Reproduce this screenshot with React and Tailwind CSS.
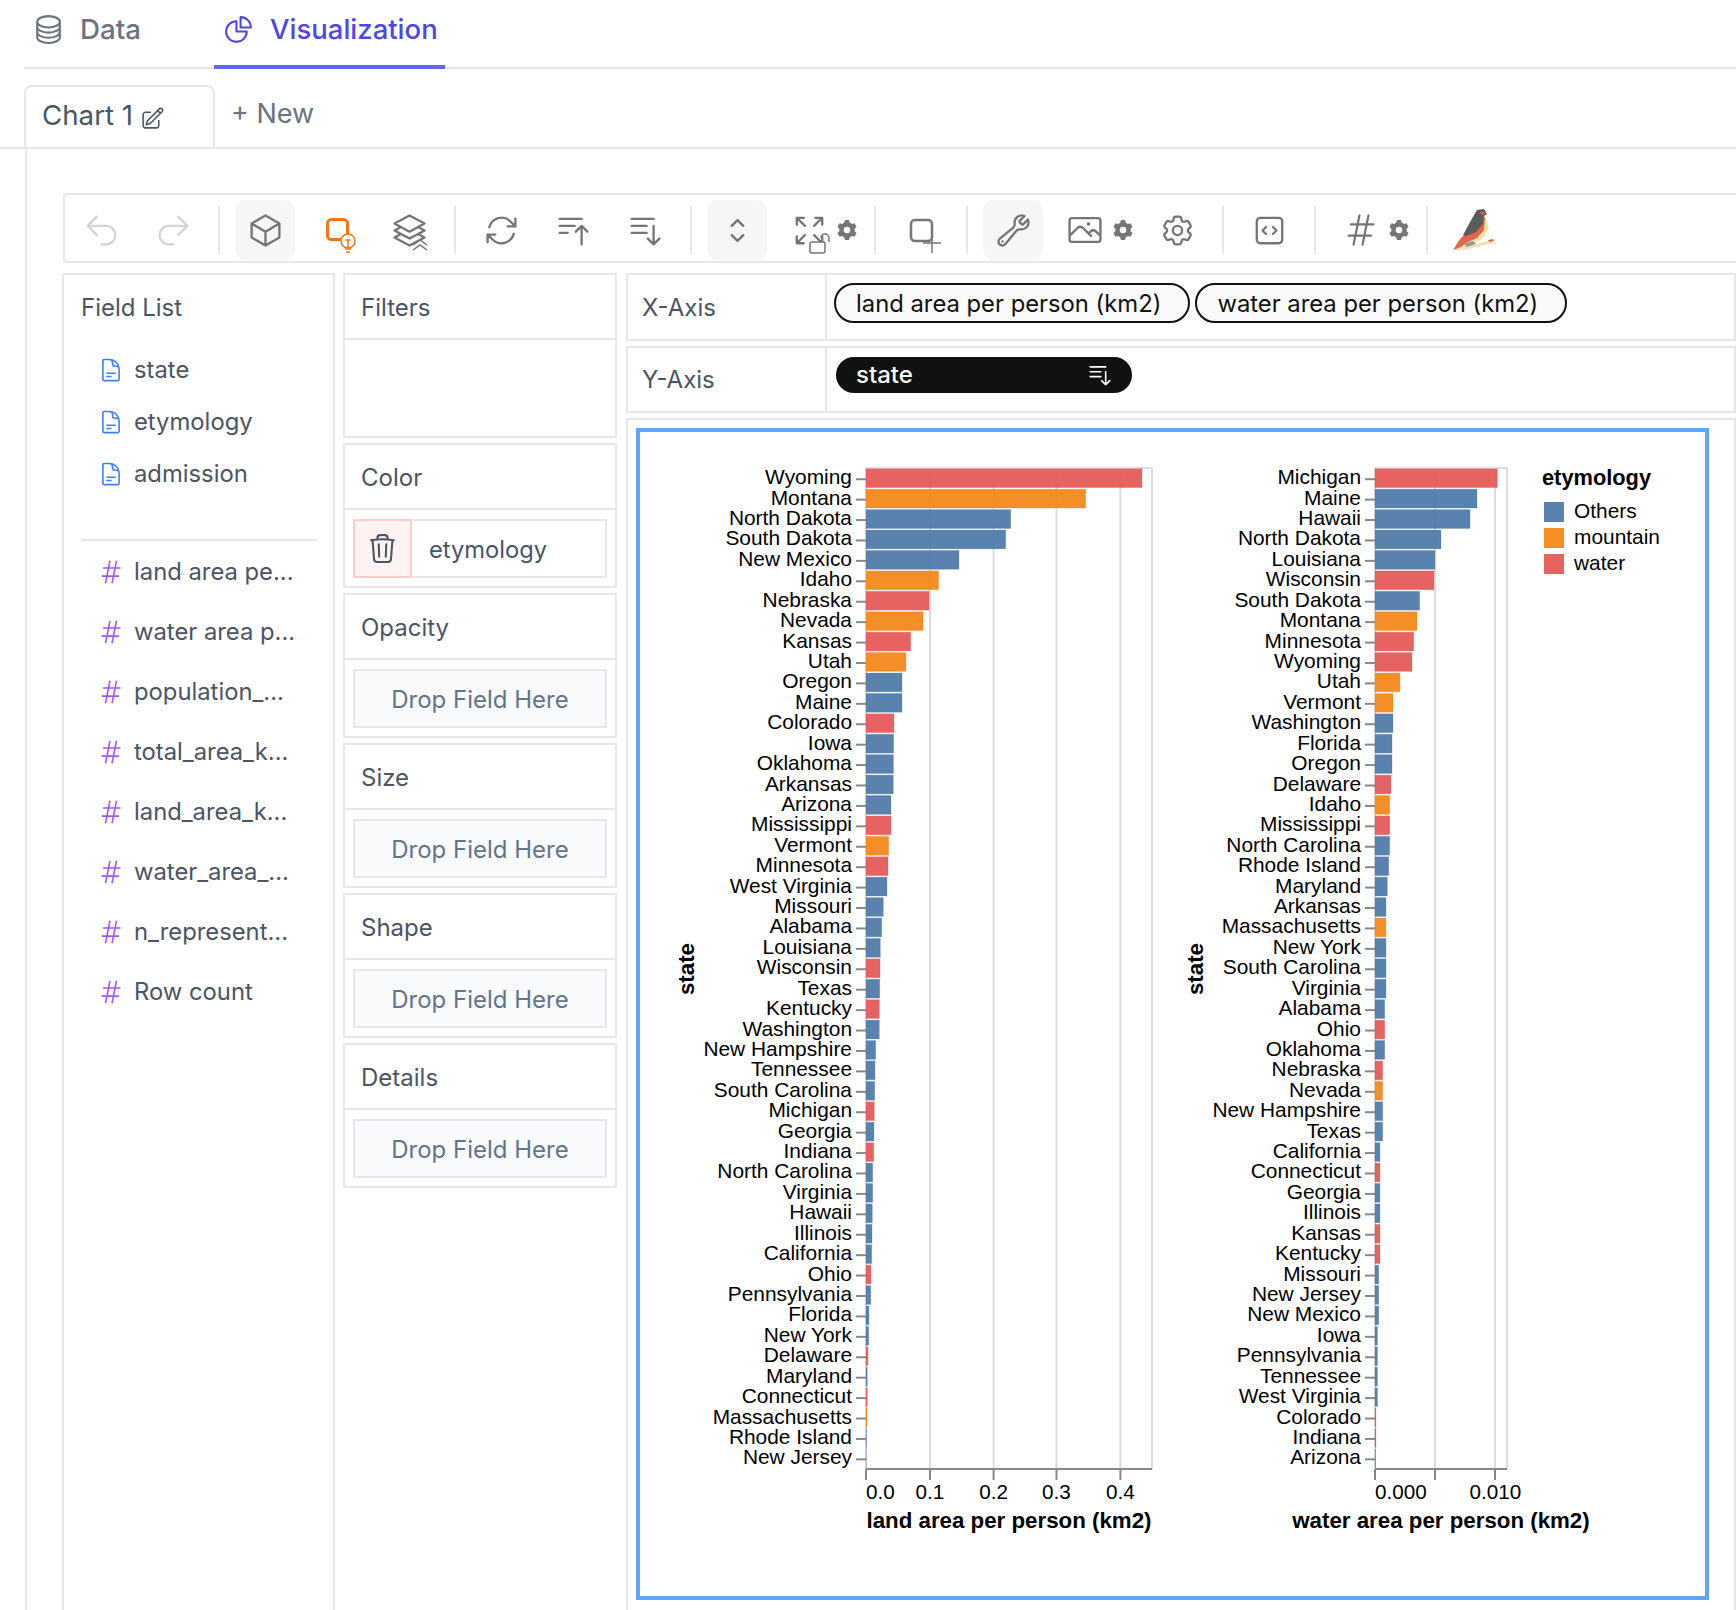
import React from "react";
import {
  HiOutlineCircleStack, HiOutlineChartPie, HiOutlinePencilSquare, HiOutlineArrowUturnLeft, HiOutlineArrowUturnRight,
  HiOutlineCube, HiOutlineSquare3Stack3D, HiOutlineArrowPath, HiOutlineBarsArrowUp, HiOutlineBarsArrowDown,
  HiOutlineChevronUpDown, HiOutlineArrowsPointingOut, HiMiniCog6Tooth, HiOutlineWrench, HiOutlinePhoto,
  HiOutlineCog6Tooth, HiOutlineCodeBracketSquare, HiOutlineHashtag, HiOutlineDocumentText, HiOutlineTrash,
} from "react-icons/hi2";

const B = "#4c78a8", O = "#f58518", R = "#e45756";
const left = [
  ["Wyoming",1142,R],["Montana",1085.7,O],["North Dakota",1010.7,B],["South Dakota",1005.7,B],["New Mexico",959,B],["Idaho",938.6,O],["Nebraska",929,R],["Nevada",923,O],["Kansas",910.7,R],["Utah",906,O],
  ["Oregon",902,B],["Maine",902,B],["Colorado",894,R],["Iowa",893.6,B],["Oklahoma",893.4,B],["Arkansas",893.3,B],["Arizona",891,B],["Mississippi",891,R],["Vermont",888.7,O],["Minnesota",888,R],
  ["West Virginia",887,B],["Missouri",883.3,B],["Alabama",881.7,B],["Louisiana",880.3,B],["Wisconsin",880,R],["Texas",879.7,B],["Kentucky",879.3,R],["Washington",879.3,B],["New Hampshire",875.7,B],["Tennessee",875,B],
  ["South Carolina",874.7,B],["Michigan",874.3,R],["Georgia",874,B],["Indiana",873.7,R],["North Carolina",872.7,B],["Virginia",872.7,B],["Hawaii",872.3,B],["Illinois",872,B],["California",871.7,B],["Ohio",871,R],
  ["Pennsylvania",870.7,B],["Florida",869,B],["New York",868.7,B],["Delaware",868,R],["Maryland",867.3,B],["Connecticut",867.3,R],["Massachusetts",867,O],["Rhode Island",866.5,B],["New Jersey",866.2,B],
];
const right = [
  ["Michigan",1497.4,R],["Maine",1477,B],["Hawaii",1470,B],["North Dakota",1441,B],["Louisiana",1435,B],["Wisconsin",1434,R],["South Dakota",1419.7,B],["Montana",1417,O],["Minnesota",1413.7,R],["Wyoming",1412,R],
  ["Utah",1400,O],["Vermont",1393,O],["Washington",1393,B],["Florida",1392,B],["Oregon",1392,B],["Delaware",1391,R],["Idaho",1389.7,O],["Mississippi",1389.7,R],["North Carolina",1389.7,B],["Rhode Island",1388.7,B],
  ["Maryland",1387.3,B],["Arkansas",1386,B],["Massachusetts",1386,O],["New York",1386,B],["South Carolina",1386,B],["Virginia",1386,B],["Alabama",1384.7,B],["Ohio",1384.7,R],["Oklahoma",1384.7,B],["Nebraska",1382.7,R],
  ["Nevada",1382.7,O],["New Hampshire",1382.7,B],["Texas",1382.7,B],["California",1380,B],["Connecticut",1380,R],["Georgia",1380,B],["Illinois",1380,B],["Kansas",1380,R],["Kentucky",1380,R],["Missouri",1378.7,B],
  ["New Jersey",1378.7,B],["New Mexico",1378.7,B],["Iowa",1377.5,B],["Pennsylvania",1377.5,B],["Tennessee",1377.5,B],["West Virginia",1377.5,B],["Colorado",1376,R],["Indiana",1376,R],["Arizona",1375.6,B],
];

function Plot({ rows, x0, xEnd, grids, ticks, title, titleX, stateX }) {
  const step = 20.42, top = 468, bottom = 1469;
  return (
    <g>
      <line x1={x0} x2={xEnd} y1={top} y2={top} stroke="#dddddd" strokeWidth="2" />
      {grids.map((g) => <line key={g} x1={g} x2={g} y1={top} y2={bottom} stroke="#dddddd" strokeWidth="2" />)}
      {rows.map(([name, end, c], i) => {
        const cy = top + 10.2 + step * i;
        return (
          <g key={name}>
            <line x1={x0 - 10} x2={x0} y1={cy + 1} y2={cy + 1} stroke="#888888" strokeWidth="2" />
            <text x={x0 - 14} y={cy + 6} textAnchor="end" fontSize="20.9" fill="#000">{name}</text>
            <rect x={x0} y={cy - 9.4} width={end - x0} height={18.8} fill={c} fillOpacity="0.93" stroke={c} strokeOpacity="0.25" strokeWidth="1" />
          </g>
        );
      })}
      <line x1={x0} x2={xEnd} y1={bottom} y2={bottom} stroke="#888888" strokeWidth="2" />
      {grids.slice(0, -1).map((g) => <line key={g} x1={g} x2={g} y1={bottom} y2={bottom + 11} stroke="#888888" strokeWidth="2" />)}
      {ticks.map(([t, x, a]) => <text key={t} x={x} y={1499} textAnchor={a} fontSize="20.7" fill="#000">{t}</text>)}
      <text x={titleX} y={1528} textAnchor="middle" fontSize="22.3" fontWeight="700" fill="#000">{title}</text>
      <text x={stateX} y={969} textAnchor="middle" fontSize="22.3" fontWeight="700" fill="#000" transform={`rotate(-90 ${stateX} 969)`}>state</text>
    </g>
  );
}

function Chart() {
  return (
    <svg width="1065" height="1164" viewBox="640 432 1065 1164" className="block [font-family:'Liberation_Sans',Arial,sans-serif]">
      <Plot rows={left} x0={866} xEnd={1152} grids={[866, 930, 993.6, 1056.5, 1120.4, 1152]}
        ticks={[["0.0", 866, "start"], ["0.1", 930, "middle"], ["0.2", 993.6, "middle"], ["0.3", 1056.5, "middle"], ["0.4", 1120.4, "middle"]]}
        title="land area per person (km2)" titleX={1009} stateX={694} />
      <Plot rows={right} x0={1375} xEnd={1507} grids={[1375, 1435, 1495, 1507]}
        ticks={[["0.000", 1375, "start"], ["0.010", 1495.5, "middle"]]}
        title="water area per person (km2)" titleX={1441} stateX={1203} />
      <text x={1542} y={485} fontSize="21.8" fontWeight="700" fill="#000">etymology</text>
      {[["Others", B, 502], ["mountain", O, 528], ["water", R, 554]].map(([t, c, y]) => (
        <g key={t}>
          <rect x={1544} y={y} width={20} height={20} fill={c} fillOpacity="0.93" />
          <text x={1574} y={y + 16} fontSize="20.9" fill="#000">{t}</text>
        </g>
      ))}
    </svg>
  );
}

const Sep = ({ ml }) => <div className={`w-[2px] h-[48px] mt-[6px] bg-[#e5e7eb] shrink-0 ${ml}`} />;
const Btn = ({ cls = "", children }) => (
  <div className={`relative h-[60px] shrink-0 flex items-center justify-center text-[#757575] ${cls}`}>{children}</div>
);

function Bird() {
  return (
    <svg width="60" height="60" viewBox="0 0 60 60">
      <g transform="translate(-2 0)">
        <path d="M44 16 L48 28 L42 38 L30 46 L19 50 L13 50 L24 39 Z" fill="#f1e3a6" />
        <path d="M44 17 L43 30 L36 38 L25 43 L20 47 L12 50 L19 39 L26 32 Z" fill="#e2654c" />
        <path d="M36 10 L43 9 L46 14 L43 16 L42 24 L35 32 L25 36 L22 35 L28 24 L33 15 Z" fill="#5b5b5b" />
        <path d="M39 12 L44 12 L43 15 L40 14 Z" fill="#e2654c" />
        <path d="M23 44 L32 41 L35 44 L26 47 Z" fill="#8d9aa0" />
        <path d="M20 50 L35 44 L47 41 L56 43 L47 44 L36 47 L24 50 Z" fill="#f1e3a6" />
        <path d="M47 40 L52 39 L53 41 L48 42 Z" fill="#e2654c" />
      </g>
    </svg>
  );
}

function Toolbar() {
  return (
    <div className="h-[70px] ml-px w-[1800px] flex items-start pt-[5px] border-2 border-[#e5e7eb] rounded-[4px]">
      <Btn cls="w-[72px] text-[#d4d4d4]"><HiOutlineArrowUturnLeft size={37} /></Btn>
      <Btn cls="w-[72px] text-[#d4d4d4]"><HiOutlineArrowUturnRight size={37} /></Btn>
      <Sep ml="ml-[9px]" />
      <Btn cls="w-[60px] ml-[15px] bg-[#f6f6f6] rounded-[10px]"><HiOutlineCube size={37} /></Btn>
      <Btn cls="w-[60px] ml-[15px]">
        <svg width="60" height="60" viewBox="0 0 60 60" fill="none" stroke="#f97316">
          <rect x="17.5" y="19.5" width="20" height="20" rx="4" strokeWidth="3" />
          <circle cx="38" cy="41" r="7" strokeWidth="1.5" fill="#fff" />
          <path d="M35.5 40h5M38 40v8M35 49h6M36 52h4" strokeWidth="1.5" />
        </svg>
      </Btn>
      <Btn cls="w-[60px] ml-[10px]">
        <HiOutlineSquare3Stack3D size={37} className="-ml-[1px]" />
        <svg className="absolute left-0 top-0" width="60" height="60" viewBox="0 0 60 60" fill="none" stroke="#757575" strokeWidth="1.5">
          <path d="M33 45l7-5 7 5M33 50l7-5 7 5" />
        </svg>
      </Btn>
      <Sep ml="ml-[14px]" />
      <Btn cls="w-[60px] ml-[15px]"><HiOutlineArrowPath size={37} /></Btn>
      <Btn cls="w-[60px] ml-[12px]"><HiOutlineBarsArrowUp size={37} /></Btn>
      <Btn cls="w-[60px] ml-[12px]"><HiOutlineBarsArrowDown size={37} /></Btn>
      <Sep ml="ml-[15px]" />
      <Btn cls="w-[60px] ml-[15px] bg-[#f6f6f6] rounded-[10px]"><HiOutlineChevronUpDown size={37} /></Btn>
      <Btn cls="w-[40px] ml-[22px]">
        <HiOutlineArrowsPointingOut size={37} className="shrink-0" />
        <svg className="absolute left-0 top-0" width="60" height="60" viewBox="0 0 60 60" fill="none" stroke="#757575" strokeWidth="1.5">
          <rect x="21" y="42" width="15" height="11" rx="2" fill="#fff" />
          <path d="M32 38a4 4 0 0 1 8 0v4" />
        </svg>
      </Btn>
      <Btn cls="w-[24px] ml-[6px]"><HiMiniCog6Tooth size={22} /></Btn>
      <Sep ml="ml-[15px]" />
      <Btn cls="w-[60px] ml-[19px]">
        <svg width="60" height="60" viewBox="0 0 60 60" fill="none" stroke="#757575">
          <rect x="16" y="20" width="21" height="21" rx="4" strokeWidth="2.5" />
          <path d="M28 43h18M37 36v17" strokeWidth="1.5" />
        </svg>
      </Btn>
      <Sep ml="ml-[11px]" />
      <Btn cls="w-[60px] ml-[15px] bg-[#f6f6f6] rounded-[10px]"><HiOutlineWrench size={37} /></Btn>
      <Btn cls="w-[50px] ml-[17px]"><HiOutlinePhoto size={38} /></Btn>
      <Btn cls="w-[24px] ml-[1px]"><HiMiniCog6Tooth size={22} /></Btn>
      <Btn cls="w-[60px] ml-[12px]"><HiOutlineCog6Tooth size={37} /></Btn>
      <Sep ml="ml-[15px]" />
      <Btn cls="w-[60px] ml-[15px]"><HiOutlineCodeBracketSquare size={37} /></Btn>
      <Sep ml="ml-[15px]" />
      <Btn cls="w-[50px] ml-[20px]"><HiOutlineHashtag size={36} className="shrink-0" /></Btn>
      <Btn cls="w-[24px] ml-[1px]"><HiMiniCog6Tooth size={22} /></Btn>
      <Sep ml="ml-[15px]" />
      <Btn cls="w-[60px] ml-[15px]"><Bird /></Btn>
    </div>
  );
}

const dims = ["state", "etymology", "admission"];
const meas = ["land area pe...", "water area p...", "population_...", "total_area_k...", "land_area_k...", "water_area_...", "n_represent...", "Row count"];

function FieldList() {
  return (
    <div className="w-[273px] shrink-0 h-[1400px] border-2 border-[#e5e7eb] pl-[17px] pr-[16px]">
      <div className="h-[64px] pt-[2px] flex items-center text-[24px] text-[#4b5563]">Field List</div>
      <div className="mt-[5px]">
        {dims.map((d) => (
          <div key={d} className="h-[52px] flex items-center pl-[17px] text-[23.8px] text-[#4b5563]">
            <HiOutlineDocumentText size={26} className="text-[#3b82f6] shrink-0 mr-[10px]" />{d}
          </div>
        ))}
      </div>
      <div className="h-[2px] bg-[#e5e7eb] mt-[39px] mb-px" />
      {meas.map((d) => (
        <div key={d} className="h-[60px] flex items-center pl-[17px] text-[23.8px] text-[#4b5563]">
          <HiOutlineHashtag size={26} className="text-[#a855f7] shrink-0 mr-[10px]" />{d}
        </div>
      ))}
    </div>
  );
}

const Head = ({ children }) => (
  <div className="h-[65px] pt-[2px] border-b-2 border-[#e5e7eb] flex items-center pl-[16px] text-[24px] text-[#4b5563]">{children}</div>
);
const Drop = ({ title }) => (
  <div className="h-[145px] border-2 border-[#e5e7eb]">
    <Head>{title}</Head>
    <div className="px-[8px] pt-[9px]">
      <div className="h-[59px] pt-[2px] border-2 border-[#e5e7eb] bg-[#f9fafb] flex items-center justify-center text-[24px] text-[#64748b]">Drop Field Here</div>
    </div>
  </div>
);

function Middle() {
  return (
    <div className="w-[274px] shrink-0 flex flex-col gap-[5px]">
      <div className="h-[165px] border-2 border-[#e5e7eb]"><Head>Filters</Head></div>
      <div className="h-[145px] border-2 border-[#e5e7eb]">
        <Head>Color</Head>
        <div className="px-[8px] pt-[9px]">
          <div className="h-[59px] border-2 border-[#e5e7eb] flex items-center">
            <div className="w-[59px] h-[59px] -ml-[2px] border-2 border-[#fecaca] bg-[#fef2f2] flex items-center justify-center text-[#4b5563] shrink-0">
              <HiOutlineTrash size={33} />
            </div>
            <span className="ml-[17px] pt-[2px] text-[23.7px] text-[#4b5563]">etymology</span>
          </div>
        </div>
      </div>
      {["Opacity", "Size", "Shape", "Details"].map((t) => <Drop key={t} title={t} />)}
    </div>
  );
}

const Pill = ({ children }) => (
  <div className="h-[40px] pl-[20px] pr-[27px] pt-[2px] rounded-full border-2 border-[#111111] bg-[#fafafa] flex items-center text-[23.8px] text-[#111111] whitespace-nowrap">{children}</div>
);

function Right() {
  return (
    <div className="w-[1110px] shrink-0 flex flex-col gap-[5px]">
      <div className="h-[68px] border-2 border-[#e5e7eb] flex">
        <div className="w-[199px] pt-[2px] border-r-2 border-[#e5e7eb] flex items-center pl-[14px] text-[24px] text-[#4b5563]">X-Axis</div>
        <div className="flex items-start gap-[5px] pl-[7px] pt-[8px]">
          <Pill>land area per person (km2)</Pill>
          <Pill>water area per person (km2)</Pill>
        </div>
      </div>
      <div className="h-[67px] border-2 border-[#e5e7eb] flex">
        <div className="w-[199px] border-r-2 border-[#e5e7eb] flex items-center pl-[14px] text-[24px] text-[#4b5563]">Y-Axis</div>
        <div className="pl-[9px] pt-[9px]">
          <div className="w-[296px] h-[36px] rounded-[18px] bg-[#111111] text-white text-[24px] font-medium flex items-center justify-between pl-[20px] pr-[19px]">
            state<HiOutlineBarsArrowDown size={26} />
          </div>
        </div>
      </div>
      <div className="h-[1300px] border-2 border-[#e5e7eb] p-[8px]">
        <div className="w-[1073px] h-[1172px] border-4 border-[#60a5fa]"><Chart /></div>
      </div>
    </div>
  );
}

export default function App() {
  return (
    <div className="w-[1736px] h-[1610px] overflow-hidden bg-white [font-family:Inter,sans-serif]">
      <div className="ml-[24px] h-[69px] flex border-b-2 border-[#e5e7eb]">
        <div className="w-[190px] h-[67px] pl-[8px] pb-[8px] flex items-center gap-[15px] text-[27.7px] font-medium text-[#6b7280]">
          <HiOutlineCircleStack size={33} />Data
        </div>
        <div className="w-[231px] h-[69px] pl-[8px] pb-[6px] border-b-4 border-[#6366f1] flex items-center gap-[15px] text-[27.5px] font-medium text-[#4f46e5]">
          <HiOutlineChartPie size={33} />Visualization
        </div>
      </div>
      <div className="mt-[16px] h-[64px] flex border-b-2 border-[#e5e7eb]">
        <div className="ml-[24px] w-[191px] h-[62px] pb-[2px] border-2 border-b-0 border-[#e5e7eb] rounded-t-[8px] flex items-center pl-[16px] text-[27.7px] text-[#4b5563]">
          Chart 1<HiOutlinePencilSquare size={25} className="ml-[7px] mt-[5px] shrink-0" />
        </div>
        <div className="ml-[16px] h-[62px] pb-[4px] flex items-center text-[27px] text-[#6b7280]">+ New</div>
      </div>
      <div className="ml-[25px] border-l-2 border-[#e5e7eb] pl-[35px] pt-[44px]">
        <Toolbar />
        <div className="mt-[10px] flex gap-[8px]">
          <FieldList />
          <Middle />
          <div className="ml-px"><Right /></div>
        </div>
      </div>
    </div>
  );
}
